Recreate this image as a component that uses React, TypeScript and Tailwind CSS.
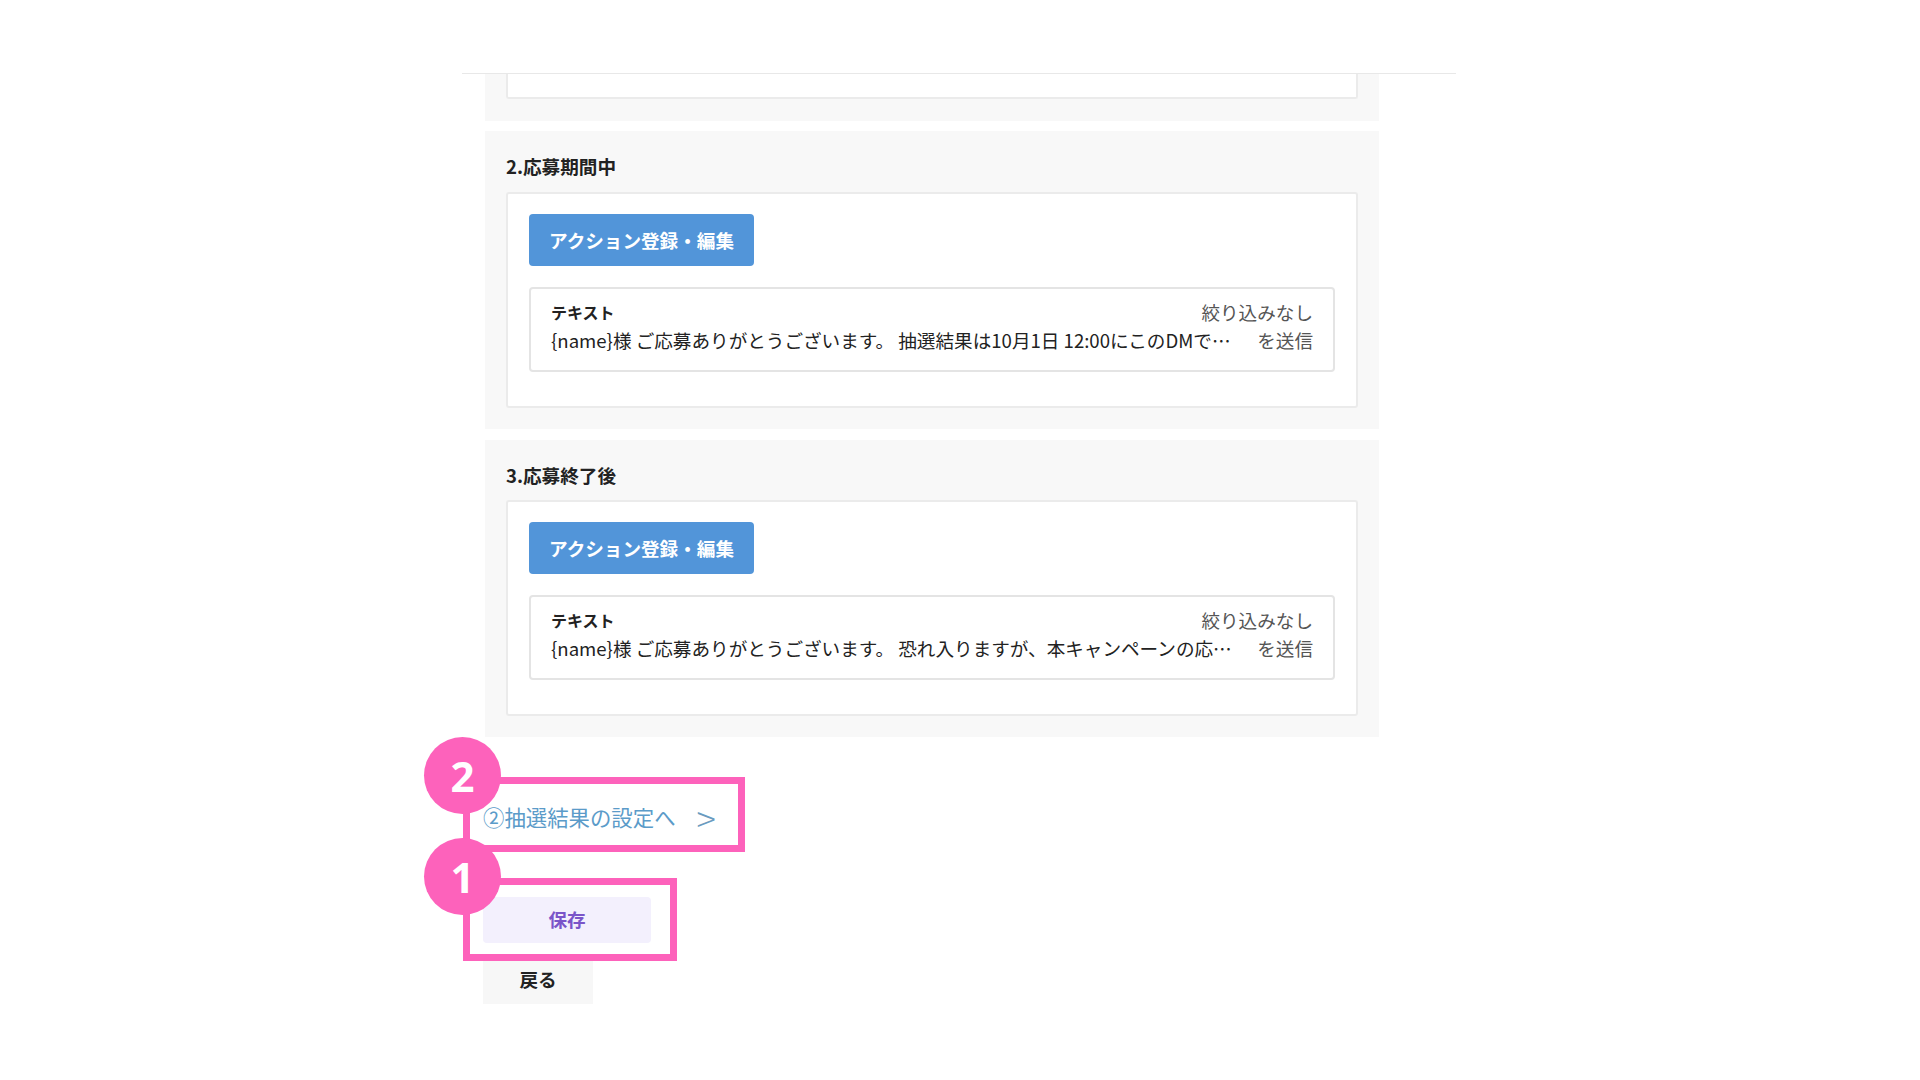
const font = "[font-family:'Noto_Sans_CJK_JP','Noto_Sans',sans-serif]";

function Section({ title, message, h, headH }: { title: string; message: string; h: string; headH: string }) {
  return (
    <section className={`${h} bg-[#f8f8f8] px-[21px] pt-[21px]`}>
      <h2 className={`${headH} text-[18.6px] leading-[27px] font-bold text-[#222]`}>{title}</h2>
      <div className="h-[216px] rounded-[3px] border-2 border-[#ebebeb] bg-white px-[21px] pt-[20px]">
        <button className="h-[52px] w-[225px] rounded-[4px] bg-[#5295d9] text-[18.6px] font-bold text-white">
          アクション登録・編集
        </button>
        <div className="mt-[21px] h-[85px] rounded-[4px] border-2 border-[#e4e4e4] bg-white px-[20px] pt-[10px]">
          <div className="flex h-[26px] items-center justify-between">
            <span className="text-[16px] leading-[26px] font-bold text-[#222]">テキスト</span>
            <span className="text-[18.6px] leading-[26px] text-[#555]">絞り込みなし</span>
          </div>
          <div className="flex h-[30px] items-center justify-between">
            <span className="whitespace-nowrap text-[18.6px] leading-[30px] text-[#222]">{message}</span>
            <span className="text-[18.6px] leading-[30px] text-[#555]">を送信</span>
          </div>
        </div>
      </div>
    </section>
  );
}

function Badge({ n, top }: { n: string; top: string }) {
  return (
    <div className={`absolute left-[424px] ${top} flex h-[77px] w-[77px] items-center justify-center rounded-full bg-[#fd62bb] font-['Noto_Sans',sans-serif] text-[42px] font-bold text-white`}>
      {n}
    </div>
  );
}

export default function App() {
  return (
    <div className={`relative h-[1080px] w-[1920px] overflow-hidden bg-white ${font}`}>
      <div className="ml-[462px] h-[74px] w-[994px] border-b border-[#e8e8e8]" />

      <div className="ml-[485px] flex w-[894px] flex-col">
        <div className="h-[47px] bg-[#f8f8f8] px-[21px]">
          <div className="h-[25px] rounded-b-[3px] border-2 border-t-0 border-[#ebebeb] bg-white" />
        </div>
        <div className="h-[10px]" />
        <Section
          h="h-[298px]"
          headH="h-[40px]"
          title="2.応募期間中"
          message="{name}様 ご応募ありがとうございます。 抽選結果は10月1日 12:00にこのDMで…"
        />
        <div className="h-[11px]" />
        <Section
          h="h-[297px]"
          headH="h-[39px]"
          title="3.応募終了後"
          message="{name}様 ご応募ありがとうございます。 恐れ入りますが、本キャンペーンの応…"
        />
      </div>

      <div className="ml-[483px] flex flex-col items-start">
        <a className="mt-[60px] flex h-[40px] items-center text-[21.4px] text-[#5b9bc9]">
          <span>②抽選結果の設定へ</span>
          <span className="ml-[21px] text-[36px] leading-[40px] font-light text-[#6a9bc0]">&gt;</span>
        </a>
        <button className="mt-[60px] h-[46px] w-[168px] rounded-[4px] bg-[#f3f0fd] pb-[2px] text-[18.6px] font-bold text-[#7a55c9]">
          保存
        </button>
        <button className="mt-[18px] h-[43px] w-[110px] bg-[#f7f7f7] pb-[8px] text-[18.6px] font-bold text-[#222]">
          戻る
        </button>
      </div>

      <div className="absolute left-[463px] top-[777px] h-[75px] w-[282px] border-[7px] border-[#fd62bb]" />
      <div className="absolute left-[463px] top-[878px] h-[83px] w-[214px] border-[7px] border-[#fd62bb]" />
      <Badge n="2" top="top-[737px]" />
      <Badge n="1" top="top-[838px]" />
    </div>
  );
}
